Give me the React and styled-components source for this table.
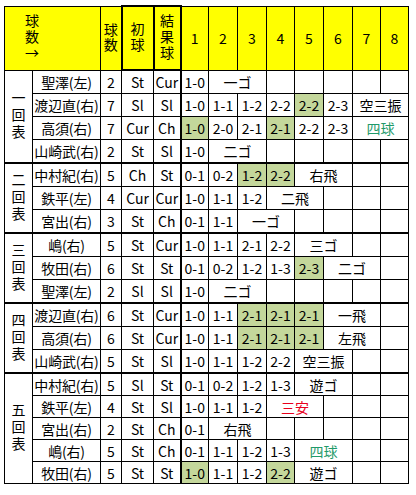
import React from "react";
import styled, { createGlobalStyle, css } from "styled-components";

const GlobalStyle = createGlobalStyle`
  html, body {
    margin: 0;
    background: #ffffff;
  }
  body {
    font-family: "Noto Sans CJK JP", "Noto Sans", sans-serif;
    color: #000000;
  }
`;

const COLORS = {
  header: "#ffff00",
  line: "#000000",
  hit: "#c4d79b",
  walk: "#1f9a6a",
  single: "#e8001c",
};

const COL_WIDTHS = [28, 68, 21, 32, 27, 28, 29, 29, 28, 29, 29, 28, 28];

// counts: ball-strike after each pitch, hl: highlighted pitches
const INNINGS = [
  {
    label: "一回表",
    batters: [
      { name: "聖澤(左)", n: 2, first: "St", last: "Cur", counts: ["1-0"], result: "一ゴ" },
      { name: "渡辺直(右)", n: 7, first: "Sl", last: "Sl", counts: ["1-0", "1-1", "1-2", "2-2", "2-2", "2-3"], hl: [4], result: "空三振" },
      { name: "高須(右)", n: 7, first: "Cur", last: "Ch", counts: ["1-0", "2-0", "2-1", "2-1", "2-2", "2-3"], hl: [0, 3], result: "四球", tone: "walk" },
      { name: "山崎武(右)", n: 2, first: "St", last: "Sl", counts: ["1-0"], result: "二ゴ" },
    ],
  },
  {
    label: "二回表",
    batters: [
      { name: "中村紀(右)", n: 5, first: "Ch", last: "St", counts: ["0-1", "0-2", "1-2", "2-2"], hl: [2, 3], result: "右飛" },
      { name: "鉄平(左)", n: 4, first: "Cur", last: "Cur", counts: ["1-0", "1-1", "1-2"], result: "二飛" },
      { name: "宮出(右)", n: 3, first: "St", last: "Ch", counts: ["0-1", "1-1"], result: "一ゴ" },
    ],
  },
  {
    label: "三回表",
    batters: [
      { name: "嶋(右)", n: 5, first: "St", last: "Cur", counts: ["1-0", "1-1", "2-1", "2-2"], result: "三ゴ" },
      { name: "牧田(右)", n: 6, first: "St", last: "St", counts: ["0-1", "0-2", "1-2", "1-3", "2-3"], hl: [4], result: "二ゴ" },
      { name: "聖澤(左)", n: 2, first: "Sl", last: "Sl", counts: ["1-0"], result: "二ゴ" },
    ],
  },
  {
    label: "四回表",
    batters: [
      { name: "渡辺直(右)", n: 6, first: "St", last: "Cur", counts: ["1-0", "1-1", "2-1", "2-1", "2-1"], hl: [2, 3, 4], result: "一飛" },
      { name: "高須(右)", n: 6, first: "St", last: "Cur", counts: ["1-0", "1-1", "2-1", "2-1", "2-1"], hl: [2, 3, 4], result: "左飛" },
      { name: "山崎武(右)", n: 5, first: "St", last: "Sl", counts: ["1-0", "1-1", "1-2", "2-2"], result: "空三振" },
    ],
  },
  {
    label: "五回表",
    compact: true,
    batters: [
      { name: "中村紀(右)", n: 5, first: "Sl", last: "St", counts: ["0-1", "0-2", "1-2", "1-3"], result: "遊ゴ" },
      { name: "鉄平(左)", n: 4, first: "St", last: "Sl", counts: ["1-0", "1-1", "1-2"], result: "三安", tone: "single" },
      { name: "宮出(右)", n: 2, first: "St", last: "Ch", counts: ["0-1"], result: "右飛" },
      { name: "嶋(右)", n: 5, first: "St", last: "Ch", counts: ["0-1", "1-1", "1-2", "1-3"], result: "四球", tone: "walk" },
      { name: "牧田(右)", n: 5, first: "St", last: "St", counts: ["1-0", "1-1", "1-2", "2-2"], hl: [0, 3], result: "遊ゴ" },
    ],
  },
];

const PITCH_SLOTS = 8;
const RESULT_SPAN = 2;

const Sheet = styled.table`
  margin: 5px 0 0 4px;
  width: 404px;
  table-layout: fixed;
  border-collapse: collapse;
  font-size: 14px;
  line-height: 18px;
  text-align: center;
  border: 1px solid ${COLORS.line};
`;

const cellBase = css`
  border: 1px solid ${COLORS.line};
  padding: 0;
  white-space: nowrap;
  overflow: hidden;
  vertical-align: middle;
`;

const HeadCell = styled.th`
  ${cellBase};
  height: 62px;
  font-weight: 400;
  background: ${COLORS.header};
  text-align: ${(p) => (p.$left ? "left" : "center")};
  padding-left: ${(p) => (p.$left ? "20px" : "0")};
  ${(p) =>
    p.$boxed &&
    css`
      border: 2px solid ${COLORS.line};
    `}
  ${(p) =>
    p.$bar &&
    css`
      border-left: 2px solid ${COLORS.line};
    `}
`;

const Vertical = styled.span`
  display: inline-block;
  writing-mode: vertical-rl;
  text-orientation: upright;
  letter-spacing: ${(p) => p.$gap}px;
  line-height: 1;
  vertical-align: middle;
`;

const Row = styled.tr`
  ${(p) =>
    p.$split &&
    css`
      & > td {
        border-top: 2px solid ${COLORS.line};
      }
    `}
`;

const Cell = styled.td`
  ${cellBase};
  height: ${(p) => (p.$compact ? 21 : 22)}px;
  background: ${(p) => (p.$hl ? COLORS.hit : "#ffffff")};
  color: ${(p) => (p.$tone ? COLORS[p.$tone] : COLORS.line)};
  ${(p) =>
    p.$bar &&
    css`
      border-left: 2px solid ${COLORS.line};
    `}
  ${(p) =>
    p.$barRight &&
    css`
      border-right: 2px solid ${COLORS.line};
    `}
`;

const NameCell = styled(Cell)`
  letter-spacing: -0.2px;
`;

function PitchCells({ batter, compact }) {
  const hl = batter.hl || [];
  const cells = batter.counts.map((c, i) => (
    <Cell key={`c${i}`} $compact={compact} $hl={hl.includes(i)} $bar={i === 0}>
      {c}
    </Cell>
  ));
  cells.push(
    <Cell key="res" colSpan={RESULT_SPAN} $compact={compact} $tone={batter.tone}>
      {batter.result}
    </Cell>
  );
  const used = batter.counts.length + RESULT_SPAN;
  for (let i = used; i < PITCH_SLOTS; i++) {
    cells.push(<Cell key={`e${i}`} $compact={compact} />);
  }
  return cells;
}

const App = () => {
  return (
    <>
      <GlobalStyle />
      <Sheet>
        <colgroup>
          {COL_WIDTHS.map((w, i) => (
            <col key={i} style={{ width: w }} />
          ))}
        </colgroup>
        <thead>
          <tr>
            <HeadCell colSpan={2} $left>
              <Vertical $gap={2}>球数→</Vertical>
            </HeadCell>
            <HeadCell>
              <Vertical $gap={1}>球数</Vertical>
            </HeadCell>
            <HeadCell $boxed>
              <Vertical $gap={2}>初球</Vertical>
            </HeadCell>
            <HeadCell $boxed>
              <Vertical $gap={2}>結果球</Vertical>
            </HeadCell>
            {Array.from({ length: PITCH_SLOTS }, (_, i) => (
              <HeadCell key={i} $bar={i === 0}>
                {i + 1}
              </HeadCell>
            ))}
          </tr>
        </thead>
        <tbody>
          {INNINGS.map((inning, ii) =>
            inning.batters.map((b, bi) => (
              <Row key={`${ii}-${bi}`} $split={bi === 0 && ii > 0}>
                {bi === 0 && (
                  <Cell rowSpan={inning.batters.length}>
                    <Vertical $gap={3}>{inning.label}</Vertical>
                  </Cell>
                )}
                <NameCell $compact={inning.compact}>{b.name}</NameCell>
                <Cell $compact={inning.compact}>{b.n}</Cell>
                <Cell $compact={inning.compact}>{b.first}</Cell>
                <Cell $compact={inning.compact} $barRight>
                  {b.last}
                </Cell>
                <PitchCells batter={b} compact={inning.compact} />
              </Row>
            ))
          )}
        </tbody>
      </Sheet>
    </>
  );
};

export default App;
